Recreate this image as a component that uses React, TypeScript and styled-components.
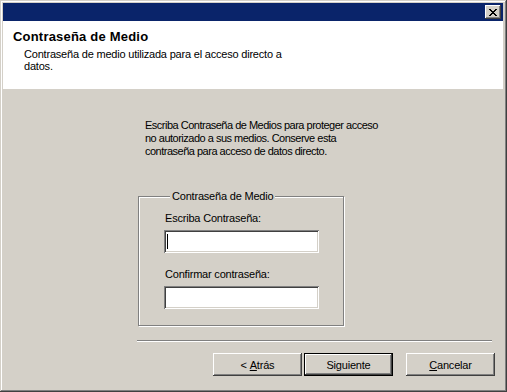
import React from "react"
import styled, { createGlobalStyle } from "styled-components"

const Global = createGlobalStyle`
  html, body {
    margin: 0;
    padding: 0;
    background: #d4d0c8;
  }
  body {
    font-family: "Liberation Sans", Arial, sans-serif;
    font-size: 11px;
    letter-spacing: -0.2px;
    color: #000;
  }
`

const Window = styled.div`
  width: 507px;
  height: 392px;
  box-sizing: border-box;
  padding: 3px 4px 4px 3px;
  display: flex;
  flex-direction: column;
  background: #d4d0c8;
  box-shadow: inset -1px -1px #404040, inset 1px 1px #d4d0c8,
    inset -2px -2px #808080, inset 2px 2px #ffffff;
`

const TitleBar = styled.div`
  height: 18px;
  flex-shrink: 0;
  background: #0a246a;
  display: flex;
  align-items: center;
  justify-content: flex-end;
  padding-right: 2px;
`

const CloseButton = styled.div`
  width: 16px;
  height: 14px;
  box-sizing: border-box;
  background: #d4d0c8;
  display: flex;
  align-items: center;
  justify-content: center;
  box-shadow: inset -1px -1px #404040, inset 1px 1px #ffffff,
    inset -2px -2px #808080, inset 2px 2px #d4d0c8;
`

const Header = styled.div`
  height: 68px;
  flex-shrink: 0;
  background: #ffffff;
  box-sizing: border-box;
  padding: 8px 0 0 10px;
`

const Title = styled.div`
  font-weight: bold;
  font-size: 13px;
  line-height: 15px;
  letter-spacing: 0.2px;
`

const Subtitle = styled.div`
  margin: 4px 0 0 11px;
  line-height: 12px;
`

const Body = styled.div`
  flex: 1;
  display: flex;
  flex-direction: column;
  padding: 0 0 0 134px;
`

const Intro = styled.div`
  margin: 30px 0 0 8px;
  line-height: 13px;
  letter-spacing: -0.5px;
`

const Group = styled.fieldset`
  margin: 32px 0 0 1px;
  width: 206px;
  box-sizing: border-box;
  padding: 9px 0 16px 25px;
  border: 1px solid #808080;
  box-shadow: inset 1px 1px #ffffff, 1px 1px #ffffff;
  min-width: 0;
`

const Legend = styled.legend`
  margin-left: 6px;
  padding: 0 2px;
  line-height: 13px;
  background: #d4d0c8;
`

const FieldLabel = styled.div`
  line-height: 13px;
  margin: 0 0 5px 1px;
`

const TextBox = styled.div<{ gapBelow?: number }>`
  width: 155px;
  height: 23px;
  box-sizing: border-box;
  background: #ffffff;
  margin-bottom: ${(p) => p.gapBelow ?? 0}px;
  display: flex;
  align-items: center;
  padding-left: 3px;
  box-shadow: inset 1px 1px #808080, inset -1px -1px #ffffff,
    inset 2px 2px #404040, inset -2px -2px #d4d0c8;
`

const Caret = styled.div`
  width: 1px;
  height: 15px;
  background: #000;
`

const Separator = styled.div`
  margin: 14px 0 0 0;
  width: 355px;
  height: 1px;
  background: #808080;
  border-bottom: 1px solid #ffffff;
`

const ButtonRow = styled.div`
  display: flex;
  margin: 11px 0 0 76px;
`

const Button = styled.div<{ isDefault?: boolean; gapLeft?: number }>`
  width: 89px;
  height: 23px;
  box-sizing: border-box;
  margin-left: ${(p) => p.gapLeft ?? 0}px;
  display: flex;
  align-items: center;
  justify-content: center;
  border: ${(p) => (p.isDefault ? "1px solid #000" : "none")};
  box-shadow: inset -1px -1px #404040, inset 1px 1px #ffffff,
    inset -2px -2px #808080, inset 2px 2px #d4d0c8;
`

const Key = styled.span`
  text-decoration: underline;
`

const CloseIcon = () => (
  <svg width="8" height="7" viewBox="0 0 8 7" shapeRendering="crispEdges">
    <path
      d="M0 0h2v1H0zM6 0h2v1H6zM1 1h2v1H1zM5 1h2v1H5zM2 2h4v1H2zM3 3h2v1H3zM2 4h4v1H2zM1 5h2v1H1zM5 5h2v1H5zM0 6h2v1H0zM6 6h2v1H6z"
      fill="#000"
    />
  </svg>
)

export default function App() {
  return (
    <>
      <Global />
      <Window>
        <TitleBar>
          <CloseButton>
            <CloseIcon />
          </CloseButton>
        </TitleBar>
        <Header>
          <Title>Contraseña de Medio</Title>
          <Subtitle>
            Contraseña de medio utilizada para el acceso directo a
            <br />
            datos.
          </Subtitle>
        </Header>
        <Body>
          <Intro>
            Escriba Contraseña de Medios para proteger acceso
            <br />
            no autorizado a sus medios. Conserve esta
            <br />
            contraseña para acceso de datos directo.
          </Intro>
          <Group>
            <Legend>Contraseña de Medio</Legend>
            <FieldLabel>Escriba Contraseña:</FieldLabel>
            <TextBox gapBelow={15}>
              <Caret />
            </TextBox>
            <FieldLabel>Confirmar contraseña:</FieldLabel>
            <TextBox />
          </Group>
          <Separator />
          <ButtonRow>
            <Button>
              &lt;&nbsp;<Key>A</Key>trás
            </Button>
            <Button isDefault gapLeft={2}>
              Siguiente
            </Button>
            <Button gapLeft={13}>
              <Key>C</Key>ancelar
            </Button>
          </ButtonRow>
        </Body>
      </Window>
    </>
  )
}
